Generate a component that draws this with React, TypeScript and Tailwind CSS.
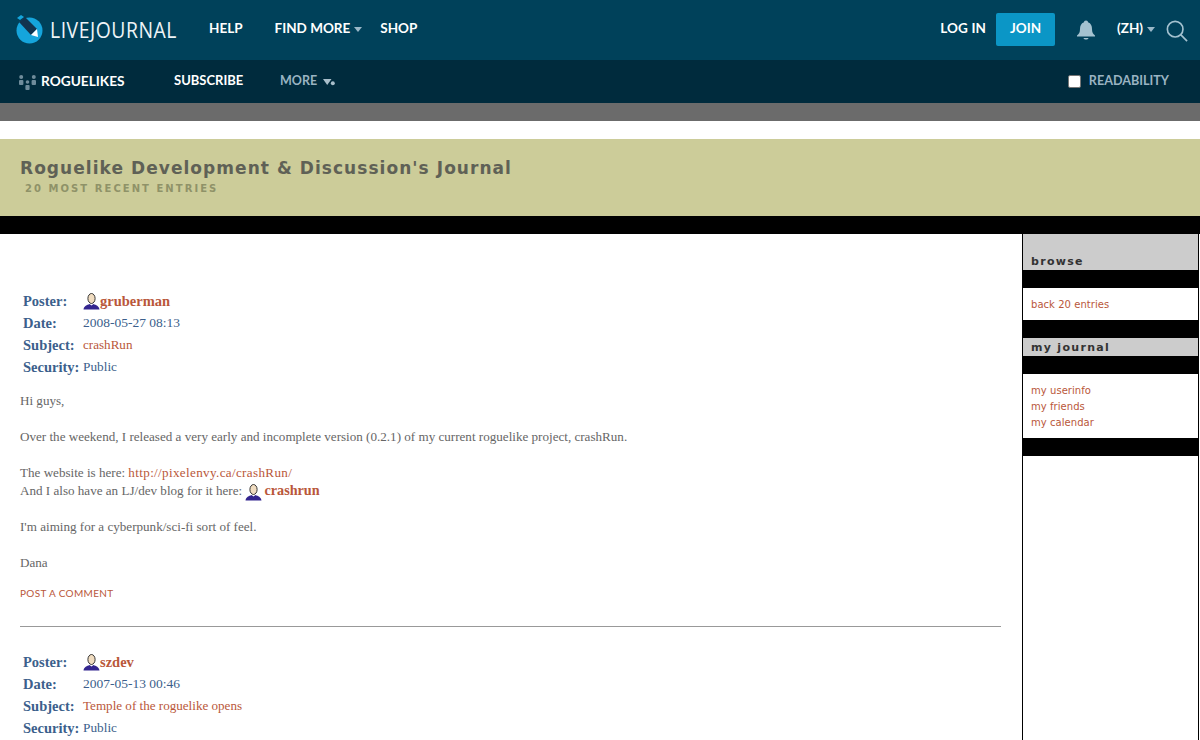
const navFont = "font-['Lato','Liberation_Sans',sans-serif]";
const serif = "font-['Liberation_Serif','Noto_Serif',serif]";
const side = "font-['DejaVu_Sans','Liberation_Sans',sans-serif]";

function UserHead() {
  return (
    <svg width="17" height="17" viewBox="0 0 17 17" className="inline-block align-[-3px] -my-[3px]">
      <ellipse cx="8.5" cy="5.5" rx="3.6" ry="5" fill="#f0dcc0" stroke="#222" strokeWidth="0.9" />
      <path d="M0.5 16.5 C1 13 4 12 6.5 11 L8.5 12.5 L10.5 11 C13 12 16 13 16.5 16.5 Z" fill="#33258f" />
    </svg>
  );
}

function Logo() {
  return (
    <svg width="29" height="30" viewBox="0 0 29 30">
      <circle cx="14.5" cy="15.5" r="13" fill="#15a5dc" />
      <path d="M2 3 L6 0 L9 2 L5 5 Z" fill="#15a5dc" />
      <path d="M4 7 L10 2 L22 14 L16 20 Z" fill="#12344f" />
      <path d="M16 20 L22 14 L23 22 Z" fill="#fff" />
    </svg>
  );
}

function Caret({ cls = "border-t-[#9ab8c8]" }: { cls?: string }) {
  return <span className={`inline-block w-0 h-0 border-x-[4px] border-x-transparent border-t-[5px] ${cls}`} />;
}

function Row({ label, children }: { label: string; children: React.ReactNode }) {
  return (
    <div className="flex h-[22px] items-center">
      <span className="w-[60px] font-bold text-[#3c5f8c] text-[14.5px]">{label}</span>
      <span className="text-[#3c5f8c] text-[13.3px]">{children}</span>
    </div>
  );
}

function Meta({ user, date, subject }: { user: string; date: string; subject: string }) {
  return (
    <div className="pl-[3px]">
      <Row label="Poster:">
        <span className="flex items-center">
          <UserHead />
          <a className="font-bold text-[#b9573a] text-[14.5px]">{user}</a>
        </span>
      </Row>
      <Row label="Date:"><span className="text-[13.5px]">{date}</span></Row>
      <Row label="Subject:"><a className="text-[#b9573a] text-[13.1px]">{subject}</a></Row>
      <Row label="Security:">Public</Row>
    </div>
  );
}

function SideHead({ children, cls }: { children: string; cls: string }) {
  return (
    <div className={`bg-[#cccccc] pl-[8px] ${cls} text-[11px] font-bold tracking-[1.3px] text-[#333333] leading-[16px]`}>
      {children}
    </div>
  );
}

export default function App() {
  return (
    <div className="h-[740px] w-[1200px] overflow-hidden bg-white flex flex-col">
      <header className={`${navFont} h-[60px] bg-[#00415a] flex items-center text-white font-bold text-[13.5px] shrink-0`}>
        <div className="ml-[15px] flex items-center w-[194px]">
          <Logo />
          <span className="ml-[6px] font-['Open_Sans',sans-serif] font-normal text-[21.5px] tracking-[0.6px] text-[#eef4f7] scale-x-[0.9] origin-left">LIVEJOURNAL</span>
        </div>
        <a className="-mt-[3px]">HELP</a>
        <a className="ml-[32px] -mt-[3px]">FIND MORE</a>
        <span className="ml-[4px] -mt-[2px] flex"><Caret /></span>
        <a className="ml-[18px] -mt-[3px]">SHOP</a>
        <div className="ml-auto flex items-center">
          <a className="-mt-[3px] tracking-[0.1px]">LOG IN</a>
          <a className="ml-[10px] w-[59px] h-[33px] bg-[#0b96c6] rounded-[2px] flex items-center justify-center -mt-[1px] pb-[2px]">JOIN</a>
          <svg width="20" height="22" viewBox="0 0 20 22" className="ml-[21px]">
            <path d="M10 1.5 C11.5 1.5 12 2.5 12 3.2 C15 4.2 16 7 16 10 C16 13.5 17 15 19 16.5 L19 17.5 L1 17.5 L1 16.5 C3 15 4 13.5 4 10 C4 7 5 4.2 8 3.2 C8 2.5 8.5 1.5 10 1.5 Z" fill="#a4c2d0" />
            <path d="M7.5 19 H12.5 C12 21 8 21 7.5 19 Z" fill="#a4c2d0" />
          </svg>
          <span className="ml-[21px] -mt-[3px]">(ZH)</span>
          <span className="ml-[4px] -mt-[2px] flex"><Caret /></span>
          <svg width="22" height="22" viewBox="0 0 24 24" className="ml-[11px] mr-[12px] mt-[1px]" fill="none" stroke="#a4c2d0" strokeWidth="1.8">
            <circle cx="10" cy="10" r="8.5" />
            <path d="M16 16 L23 23" />
          </svg>
        </div>
      </header>

      <nav className={`${navFont} h-[43px] bg-[#002b3d] flex items-center font-bold text-[13px] shrink-0`}>
        <svg width="17" height="15" viewBox="0 0 17 15" className="ml-[19px] mt-[1px]" fill="#6f8c9b">
          <circle cx="2.2" cy="2" r="2" />
          <rect x="0" y="5" width="4.4" height="5" rx="1" />
          <circle cx="8.5" cy="7" r="1.8" />
          <rect x="6.4" y="10" width="4.2" height="5" rx="1" />
          <circle cx="14.8" cy="2" r="2" />
          <rect x="12.6" y="5" width="4.4" height="5" rx="1" />
        </svg>
        <a className="ml-[5px] w-[133px] text-white text-[13.7px] -mt-[1px]">ROGUELIKES</a>
        <a className="w-[106px] text-white -mt-[1px]">SUBSCRIBE</a>
        <a className="text-[#9ab3c2] text-[12.5px] w-[36px] -mt-[1px]">MORE</a>
        <svg width="12" height="7" viewBox="0 0 12 7" className="ml-[7px] mt-[1px]" fill="#a9bfcb">
          <path d="M0 0 H8.5 L4.2 6 Z" />
          <circle cx="9.8" cy="4.2" r="2" />
        </svg>
        <div className="ml-auto flex items-center mr-[31px]">
          <span className="w-[13px] h-[13px] bg-white rounded-[2px] border border-[#767676]" />
          <span className="ml-[8px] text-[#9ab3c2] text-[12.6px] -mt-[1px]">READABILITY</span>
        </div>
      </nav>

      <div className="h-[18px] bg-[#6b6b6b] shrink-0" />
      <div className="h-[18px] bg-white shrink-0" />

      <div className={`${side} h-[77px] bg-[#cccc99] pl-[20px] pt-[18px] shrink-0`}>
        <div className="font-bold text-[17px] leading-[22px] tracking-[1.05px] text-[#5f6156]">Roguelike Development &amp; Discussion's Journal</div>
        <div className="ml-[5px] mt-[3px] font-bold text-[10px] leading-[14px] tracking-[2.05px] text-[#8f9268]">20 MOST RECENT ENTRIES</div>
      </div>
      <div className="h-[18px] bg-black shrink-0" />

      <div className="flex flex-1 min-h-0">
        <main className={`${serif} w-[1022px] pl-[20px] pr-[21px] pt-[56px] text-[13.1px] leading-[18px] text-[#666666] shrink-0`}>
          <Meta user="gruberman" date="2008-05-27 08:13" subject="crashRun" />
          <p className="mt-[14px]">Hi guys,</p>
          <p className="mt-[18px]">Over the weekend, I released a very early and incomplete version (0.2.1) of my current roguelike project, crashRun.</p>
          <p className="mt-[18px]">
            The website is here: <a className="text-[#b9573a] tracking-[0.35px]">http://pixelenvy.ca/crashRun/</a>
            <br />
            And I also have an LJ/dev blog for it here: <UserHead /><a className="ml-[2px] font-bold text-[#b9573a] text-[14.2px] leading-[10px]">crashrun</a>
          </p>
          <p className="mt-[18px]">I'm aiming for a cyberpunk/sci-fi sort of feel.</p>
          <p className="mt-[18px]">Dana</p>
          <a className={`${navFont} block mt-[14px] text-[10px] tracking-[0.35px] text-[#b9573a] leading-[14px]`}>POST A COMMENT</a>
          <hr className="mt-[26px] border-0 h-px bg-[#999999]" />
          <div className="mt-[24px]">
            <Meta user="szdev" date="2007-05-13 00:46" subject="Temple of the roguelike opens" />
          </div>
        </main>

        <aside className={`${side} w-[177px] border-x border-black shrink-0 self-stretch`}>
          <SideHead cls="pt-[20px]">browse</SideHead>
          <div className="h-[18px] bg-black" />
          <div className="h-[32px] pl-[8px] flex items-center text-[10px] tracking-[0.05px] text-[#b9573a]">back 20 entries</div>
          <div className="h-[18px] bg-black" />
          <SideHead cls="pt-[2px]">my journal</SideHead>
          <div className="h-[18px] bg-black" />
          <div className="h-[64px] pl-[8px] pt-[9px] text-[10px] tracking-[0.05px] leading-[16px] text-[#b9573a]">
            <div>my userinfo</div>
            <div>my friends</div>
            <div>my calendar</div>
          </div>
          <div className="h-[18px] bg-black" />
        </aside>
      </div>
    </div>
  );
}
